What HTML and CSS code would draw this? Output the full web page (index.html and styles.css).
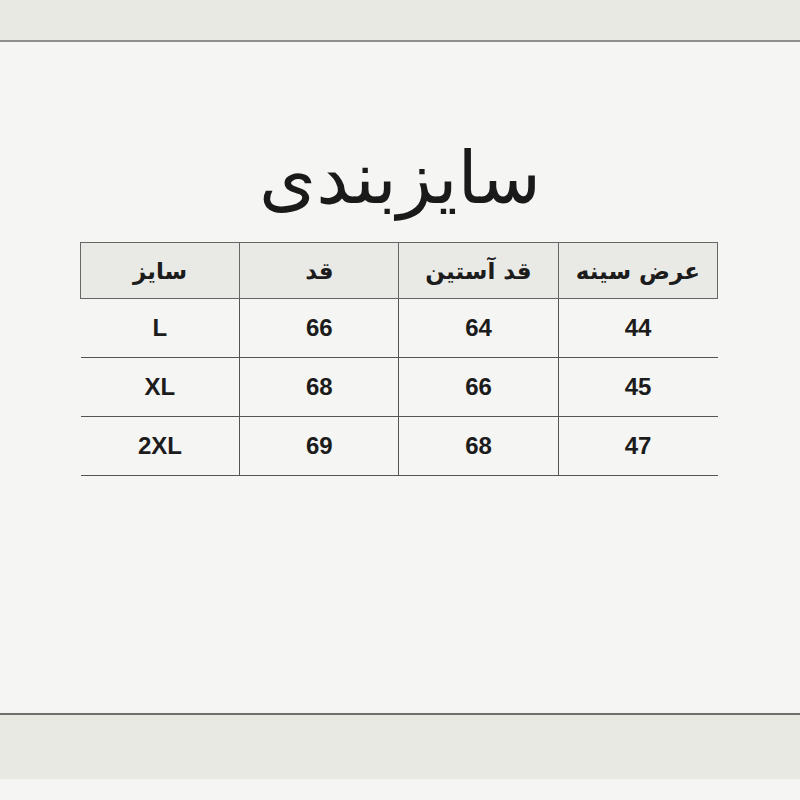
FILE: index.html
```html
<!DOCTYPE html>
<html lang="fa">
<head>
<meta charset="utf-8">
<link rel="stylesheet" href="styles.css">
</head>
<body>
<div class="page">
  <div class="topband"></div>
  <main class="main">
    <h1 class="title" dir="rtl">سایزبندی</h1>
    <table class="sizes" dir="rtl">
      <thead>
        <tr><th>عرض سینه</th><th>قد آستین</th><th>قد</th><th>سایز</th></tr>
      </thead>
      <tbody>
        <tr><td>44</td><td>64</td><td>66</td><td>L</td></tr>
        <tr><td>45</td><td>66</td><td>68</td><td>XL</td></tr>
        <tr><td>47</td><td>68</td><td>69</td><td>2XL</td></tr>
      </tbody>
    </table>
  </main>
  <div class="bottomband"></div>
</div>
</body>
</html>
```
FILE: styles.css
```css
html, body {
  margin: 0;
  padding: 0;
  background: #f5f5f3;
}
.page {
  width: 800px;
  height: 800px;
  display: flex;
  flex-direction: column;
  font-family: "DejaVu Sans", "Liberation Sans", sans-serif;
  color: #1c1c1c;
}
.topband {
  height: 40px;
  background: #e9e9e4;
  border-bottom: 2px solid #8f908b;
  flex: none;
}
.main {
  height: 671px;
  flex: none;
  display: flex;
  flex-direction: column;
  align-items: center;
}
.title {
  margin: 86px 0 0 0;
  font-size: 73px;
  font-weight: normal;
  line-height: 100px;
  height: 114px;
  color: #1a1a1a;
}
.sizes {
  border-collapse: collapse;
  width: 638px;
  margin-right: 2px;
}
.sizes th, .sizes td {
  width: 159px;
  text-align: center;
  padding: 0;
}
.sizes th {
  height: 55px;
  background: #e9e9e6;
  border: 1px solid #666;
  font-size: 23px;
  font-weight: bold;
  font-family: "DejaVu Sans", sans-serif;
}
.sizes td {
  height: 58px;
  border-bottom: 1px solid #555;
  border-left: 1px solid #555;
  font-family: "Liberation Sans", Arial, sans-serif;
  font-weight: bold;
  font-size: 24px;
}
.sizes td:last-child {
  border-left: none;
}
.bottomband {
  height: 64px;
  flex: none;
  background: #e9e9e4;
  border-top: 2px solid #6f706c;
}
```
